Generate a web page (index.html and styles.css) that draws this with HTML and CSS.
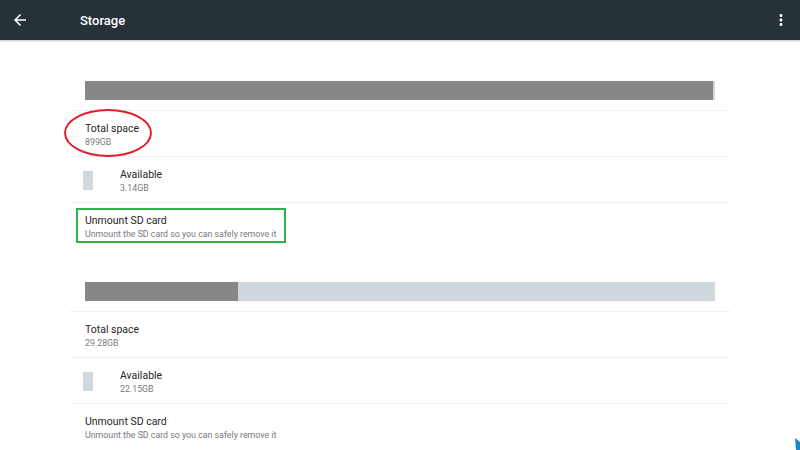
FILE: index.html
```html
<!DOCTYPE html>
<html>
<head>
<title>Storage</title>
<link rel="stylesheet" href="styles.css">
</head>
<body>
<div class="toolbar">
  <svg class="back" width="18" height="18" viewBox="0 0 24 24"><path fill="#fff" d="M20 11H7.83l5.59-5.59L12 4l-8 8 8 8 1.41-1.41L7.83 13H20v-2z"/></svg>
  <span class="title">Storage</span>
  <svg class="more" width="18" height="18" viewBox="0 0 24 24"><path fill="#fff" d="M12 8c1.1 0 2-.9 2-2s-.9-2-2-2-2 .9-2 2 .9 2 2 2zm0 2c-1.1 0-2 .9-2 2s.9 2 2 2 2-.9 2-2-.9-2-2-2zm0 6c-1.1 0-2 .9-2 2s.9 2 2 2 2-.9 2-2-.9-2-2-2z"/></svg>
</div>

<div class="content">
  <div class="volume first">
    <div class="barrow">
      <div class="bar"><div class="used" style="width:99.7%"></div></div>
    </div>
    <div class="row">
      <div class="label">Total space</div>
      <div class="sub">899GB</div>
    </div>
    <div class="row avail">
      <div class="swatch"></div>
      <div>
        <div class="label">Available</div>
        <div class="sub">3.14GB</div>
      </div>
    </div>
    <div class="row last">
      <div class="label">Unmount SD card</div>
      <div class="sub">Unmount the SD card so you can safely remove it</div>
    </div>
  </div>

  <div class="volume">
    <div class="barrow">
      <div class="bar"><div class="used" style="width:24.3%"></div></div>
    </div>
    <div class="row">
      <div class="label">Total space</div>
      <div class="sub">29.28GB</div>
    </div>
    <div class="row avail">
      <div class="swatch"></div>
      <div>
        <div class="label">Available</div>
        <div class="sub">22.15GB</div>
      </div>
    </div>
    <div class="row last">
      <div class="label">Unmount SD card</div>
      <div class="sub">Unmount the SD card so you can safely remove it</div>
    </div>
  </div>
</div>

<!-- annotations drawn on top of the screenshot -->
<div class="mark-red"></div>
<div class="mark-green"></div>
<svg class="corner" width="6" height="12" viewBox="0 0 6 12"><polygon points="1,0 6,4 6,12 2,12" fill="#1e88c8"/></svg>
</body>
</html>
```

FILE: styles.css
```css
html, body {
 margin: 0;
 padding: 0;
}

body {
 width: 800px;
 height: 450px;
 overflow: hidden;
 background: #fff;
 font-family: Roboto, "Noto Sans", sans-serif;
 position: relative;
}

.toolbar {
 height: 40px;
 background-color: #263238;
 display: flex;
 align-items: center;
 box-shadow: 0 1px 2px rgba(0,0,0,.25);
 position: relative;
 z-index: 1;
}

.toolbar .back {
 margin-left: 11px;
}

.toolbar .title {
 color: #fff;
 font-size: 13px;
 font-weight: 500;
 margin-left: 51px;
 flex: 1;
}

.toolbar .more {
 margin-right: 10px;
}

.content {
 width: 660px;
 margin-left: 70px;
}

.volume {
 margin-top: 24px;
}

.volume.first {
 margin-top: 31px;
}

.barrow {
 padding: 10px 15px;
 border-bottom: 1px solid #f0f0f0;
}

.bar {
 height: 19px;
 background-color: #cfd8dc;
}

.bar .used {
 height: 100%;
 background-color: #878787;
}

.row {
 padding: 11px 15px 8px;
 height: 26px;
 border-bottom: 1px solid #f0f0f0;
}

.row.last {
 border-bottom: 0;
}

.row.avail {
 display: flex;
 align-items: center;
}

.row.avail .swatch {
 margin-top: -2px;
}

.swatch {
 width: 10px;
 height: 19px;
 background-color: #cfd8dc;
 margin-left: -2px;
 margin-right: 27px;
}

.label {
 color: #262626;
 font-size: 10.5px;
 line-height: 14px;
}

.sub {
 color: #7a7a7a;
 font-size: 8.8px;
 line-height: 12px;
}

.mark-red {
 position: absolute;
 left: 64px;
 top: 109px;
 width: 84px;
 height: 44px;
 border: 2px solid #e0202a;
 border-radius: 50%;
}

.mark-green {
 position: absolute;
 left: 76px;
 top: 208px;
 width: 206px;
 height: 31px;
 border: 2px solid #2db34a;
}

.corner {
 position: absolute;
 right: 0;
 bottom: 0;
}
```
